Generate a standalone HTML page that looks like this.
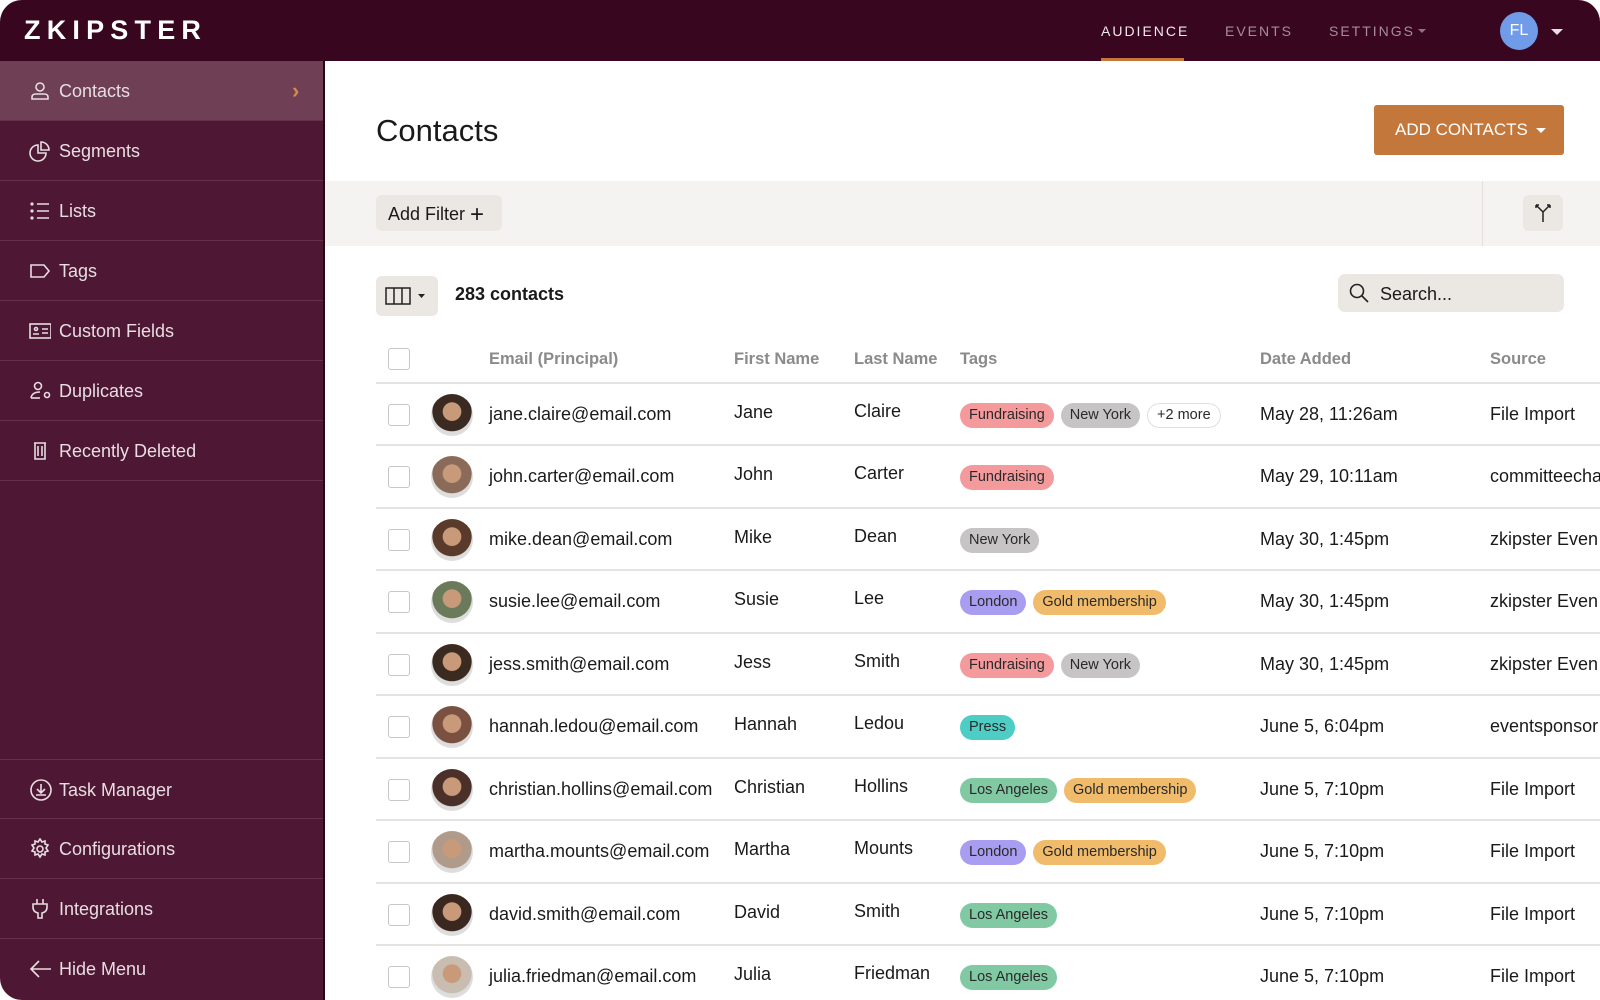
<!DOCTYPE html>
<html><head><meta charset="utf-8">
<style>
*{box-sizing:border-box;margin:0;padding:0}
body{width:1600px;height:1000px;overflow:hidden;background:#fff;font-family:"Liberation Sans",sans-serif;color:#1a1a1a}
#app{position:absolute;left:0;top:0;width:1600px;height:1000px;border-radius:22px 22px 0 22px;overflow:hidden;background:#fff}
#hdr{position:absolute;left:0;top:0;width:1600px;height:61px;background:#38061f}
.logo{position:absolute;left:24px;top:15px;color:#fff;font-weight:bold;font-size:27px;letter-spacing:6.2px}
.nav{position:absolute;top:23px;font-size:14px;letter-spacing:2px;color:#a58d98}
.nav.on{color:#f1e8ec}
.uline{position:absolute;left:1101px;top:58px;width:83px;height:3px;background:#c4773b}
.av{position:absolute;left:1500px;top:12px;width:38px;height:38px;border-radius:50%;background:#6f9be9;color:#fff;font-size:16px;text-align:center;line-height:38px}
.tri{position:absolute;width:0;height:0;border-left:6px solid transparent;border-right:6px solid transparent;border-top:6px solid #e8e0e4}
#side{position:absolute;left:0;top:61px;width:325px;height:939px;background:#4e1733;border-right:2px solid #2a0714}
.it{position:absolute;left:0;width:323px;height:60px;border-bottom:1px solid #673049;color:#e7dde2;font-size:18px;line-height:60px;padding-left:59px}
.it svg{position:absolute;left:29px;top:19px}
.it.act{background:#6e3f55}
#main{position:absolute;left:325px;top:61px;width:1275px;height:939px}
h1{position:absolute;left:51px;top:52px;font-weight:normal;font-size:31px;color:#1a1a1a}
.addc{position:absolute;left:1049px;top:44px;width:190px;height:50px;background:#c4773b;border-radius:3px;color:#fff;font-size:17px;line-height:50px;padding-left:21px}
.band{position:absolute;left:0;top:120px;width:1275px;height:65px;background:#f5f3f1}
.btn{position:absolute;background:#ebe7e2;border-radius:6px}
.row{position:absolute;left:51px;width:1230px;height:62.5px;border-bottom:2px solid #e6e4e3}
.cb{position:absolute;left:12px;width:22px;height:22px;border:1.5px solid #c9c6c4;border-radius:3px;background:#fff}
.c{position:absolute;font-size:18px;white-space:nowrap}
.th{position:absolute;font-size:16.5px;color:#8a8a8a;font-weight:bold}
.pic{position:absolute;left:55px;width:42px;height:42px;border-radius:50%;overflow:hidden}
.tags{position:absolute;left:584px;display:flex;gap:7px}
.tg{height:25px;border-radius:13px;font-size:14.5px;line-height:25px;padding:0 9px;color:#2a2a2a}
.F{background:#f4999c}.N{background:#c6c4c5}.M{background:#fff;border:1px solid #e0dede;line-height:23px}.L{background:#a89df0}.G{background:#f0bb6a}.P{background:#4dcdc4}.A{background:#80c9a3}
</style></head><body><div id="app">
<div id="hdr">
<div class="logo">ZKIPSTER</div>
<div class="nav on" style="left:1101px">AUDIENCE</div>
<div class="nav" style="left:1225px">EVENTS</div>
<div class="nav" style="left:1329px">SETTINGS</div>
<div class="tri" style="left:1418px;top:29px;border-width:4px 4px 0 4px;border-top-color:#8e7380"></div>
<div class="uline"></div>
<div class="av">FL</div>
<div class="tri" style="left:1551px;top:29px"></div>
</div>
<div id="side">
<div class="it act" style="top:0">Contacts<svg width="22" height="22" viewBox="0 0 22 22" fill="none" stroke="#e7dde2" stroke-width="1.6"><circle cx="11" cy="7" r="4"/><path d="M3 19v-2q0-3 4-3h8q4 0 4 3v2z"/></svg><span style="position:absolute;left:292px;top:0;color:#d38a4a;font-size:22px;font-weight:bold">›</span></div>
<div class="it" style="top:60px">Segments<svg width="22" height="22" viewBox="0 0 22 22" fill="none" stroke="#e7dde2" stroke-width="1.6"><path d="M9 5a8 8 0 1 0 8 8H9z"/><path d="M12 2a8 8 0 0 1 8 8h-8z"/></svg></div>
<div class="it" style="top:120px">Lists<svg width="22" height="22" viewBox="0 0 22 22" fill="none" stroke="#e7dde2" stroke-width="1.6"><circle cx="3" cy="4" r=".8"/><circle cx="3" cy="11" r=".8"/><circle cx="3" cy="18" r=".8"/><path d="M8 4h12M8 11h12M8 18h12"/></svg></div>
<div class="it" style="top:180px">Tags<svg width="22" height="22" viewBox="0 0 22 22" fill="none" stroke="#e7dde2" stroke-width="1.6"><path d="M2 5h13l5 6-5 6H2z"/></svg></div>
<div class="it" style="top:240px">Custom Fields<svg width="22" height="22" viewBox="0 0 22 22" fill="none" stroke="#e7dde2" stroke-width="1.6"><rect x="1" y="4" width="21" height="14"/><circle cx="7" cy="9" r="1.5"/><path d="M4 14h6M13 9h6M13 13h6"/></svg></div>
<div class="it" style="top:300px">Duplicates<svg width="24" height="22" viewBox="0 0 24 22" fill="none" stroke="#e7dde2" stroke-width="1.6"><circle cx="9" cy="6" r="3.5"/><path d="M2 18q1-6 9-6"/><path d="M2 18h9"/><circle cx="18" cy="15" r="2.5"/></svg></div>
<div class="it" style="top:360px">Recently Deleted<svg width="22" height="22" viewBox="0 0 22 22" fill="none" stroke="#e7dde2" stroke-width="1.6"><path d="M5 3h12M6 3v16h10V3M9 6v10M13 6v10"/></svg></div>
<div class="it" style="top:698px;border-top:1px solid #673049">Task Manager<svg width="24" height="24" viewBox="0 0 24 24" fill="none" stroke="#e7dde2" stroke-width="1.6"><circle cx="12" cy="11" r="10"/><path d="M12 5v8M8 10l4 4 4-4M7 16h10"/></svg></div>
<div class="it" style="top:758px">Configurations<svg width="22" height="22" viewBox="0 0 22 22" fill="none" stroke="#e7dde2" stroke-width="1.6"><path d="M11 1l2 3 3-1 0 3 3 1-2 3 2 3-3 1 0 3-3-1-2 3-2-3-3 1 0-3-3-1 2-3-2-3 3-1 0-3 3 1z"/><circle cx="11" cy="11" r="3"/></svg></div>
<div class="it" style="top:818px">Integrations<svg width="22" height="22" viewBox="0 0 22 22" fill="none" stroke="#e7dde2" stroke-width="1.6"><path d="M8 1v5M14 1v5M4 6h14v3q0 5-5 6v5h-4v-5q-5-1-5-6z"/></svg></div>
<div class="it" style="top:878px;border-bottom:none">Hide Menu<svg width="24" height="22" viewBox="0 0 24 22" fill="none" stroke="#e7dde2" stroke-width="1.6"><path d="M22 11H2M10 3l-8 8 8 8"/></svg></div>
</div>
<div id="main">
<h1>Contacts</h1>
<div class="addc">ADD CONTACTS<span class="tri" style="left:162px;top:23px;border-width:5px 5px 0 5px;border-top-color:#fff"></span></div>
<div class="band">
<div class="btn" style="left:51px;top:14px;width:126px;height:36px;font-size:18px;line-height:36px;padding-left:12px">Add Filter <span style="font-size:24px;position:relative;top:2px;font-weight:300">+</span></div>
<div style="position:absolute;left:1157px;top:0;width:1px;height:65px;background:#e3dfdb"></div>
<div class="btn" style="left:1198px;top:14px;width:40px;height:36px"><svg width="40" height="36" viewBox="0 0 40 36" fill="none" stroke="#222" stroke-width="1.5"><path d="M20 27V17L13 10M20 17l7-7M13 10h3M13 10v3M27 10h-3M27 10v3"/></svg></div>
</div>
<div class="btn" style="left:51px;top:215px;width:62px;height:40px"><svg width="62" height="40" viewBox="0 0 62 40" fill="none" stroke="#222" stroke-width="1.5"><rect x="10" y="12" width="24" height="16"/><path d="M18 12v16M26 12v16"/><path d="M42 18h7l-3.5 4z" fill="#222" stroke="none"/></svg></div>
<div style="position:absolute;left:130px;top:223px;font-size:18px;font-weight:bold">283 contacts</div>
<div class="btn" style="left:1013px;top:213px;width:226px;height:38px;border-radius:7px"><svg style="position:absolute;left:10px;top:8px" width="22" height="22" viewBox="0 0 22 22" fill="none" stroke="#222" stroke-width="1.6"><circle cx="9" cy="9" r="6.5"/><path d="M14 14l6 6"/></svg><span style="position:absolute;left:42px;top:10px;font-size:18px">Search...</span></div>
<div class="row" style="top:260px">
<div class="cb" style="top:27px"></div>
<div class="th" style="left:113px;top:29px">Email (Principal)</div>
<div class="th" style="left:358px;top:29px">First Name</div>
<div class="th" style="left:478px;top:29px">Last Name</div>
<div class="th" style="left:584px;top:29px">Tags</div>
<div class="th" style="left:884px;top:29px">Date Added</div>
<div class="th" style="left:1114px;top:29px">Source</div>
</div>
<div id="rows"></div>
</div>
</div>
<script>
var d=[["jane.claire@email.com","Jane","Claire",[["F","Fundraising"],["N","New York"],["M","+2 more"]],"May 28, 11:26am","File Import","#3a2a22"],
["john.carter@email.com","John","Carter",[["F","Fundraising"]],"May 29, 10:11am","committeecha","#8a6b5a"],
["mike.dean@email.com","Mike","Dean",[["N","New York"]],"May 30, 1:45pm","zkipster Even","#5a3a2a"],
["susie.lee@email.com","Susie","Lee",[["L","London"],["G","Gold membership"]],"May 30, 1:45pm","zkipster Even","#6a7a5a"],
["jess.smith@email.com","Jess","Smith",[["F","Fundraising"],["N","New York"]],"May 30, 1:45pm","zkipster Even","#3a2a20"],
["hannah.ledou@email.com","Hannah","Ledou",[["P","Press"]],"June 5, 6:04pm","eventsponsor","#7a5040"],
["christian.hollins@email.com","Christian","Hollins",[["A","Los Angeles"],["G","Gold membership"]],"June 5, 7:10pm","File Import","#4a3028"],
["martha.mounts@email.com","Martha","Mounts",[["L","London"],["G","Gold membership"]],"June 5, 7:10pm","File Import","#b09a8a"],
["david.smith@email.com","David","Smith",[["A","Los Angeles"]],"June 5, 7:10pm","File Import","#3a2820"],
["julia.friedman@email.com","Julia","Friedman",[["A","Los Angeles"]],"June 5, 7:10pm","File Import","#c8bdb0"]];
var h="";d.forEach(function(r,i){var t=322.5+62.5*i;var tg=r[3].map(function(x){return '<span class="tg '+x[0]+'">'+x[1]+'</span>'}).join("");
h+='<div class="row" style="top:'+t+'px"><div class="cb" style="top:20px"></div><div class="pic" style="top:10px;background:radial-gradient(circle at 50% 42%,#c99a7a 0 28%,'+r[6]+' 30% 60%,#ddd 62%)"></div>'+
'<div class="c" style="left:113px;top:20px">'+r[0]+'</div><div class="c" style="left:358px;top:18px">'+r[1]+'</div><div class="c" style="left:478px;top:17px">'+r[2]+'</div>'+
'<div class="tags" style="top:19px">'+tg+'</div><div class="c" style="left:884px;top:20px">'+r[4]+'</div><div class="c" style="left:1114px;top:20px">'+r[5]+'</div></div>';});
document.getElementById("rows").innerHTML=h;
</script>
</body></html>
